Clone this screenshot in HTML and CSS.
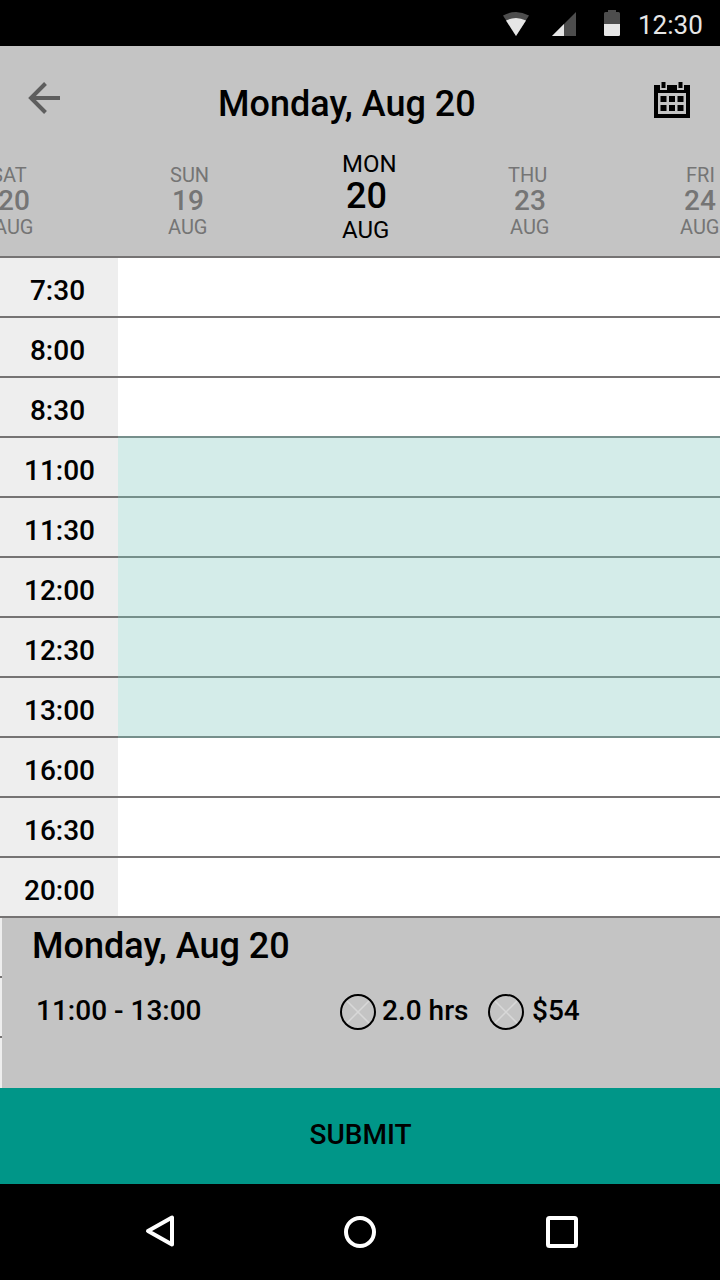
FILE: index.html
```html
<!DOCTYPE html>
<html lang="en">
<head>
<meta charset="utf-8">
<title>Monday, Aug 20</title>
<link rel="stylesheet" href="styles.css">
</head>
<body>
<div class="screen">
  <div class="status">
    <svg class="status-icons" width="130" height="46" viewBox="0 0 130 46">
      <path fill="#4d4d4d" d="M3 15.5Q16 8.500 29 15.500L16 36Z"/>
      <path fill="#e6e6e6" d="M6 20.500Q16 15.500 26 20.500L16 36Z"/>
      <path fill="#4d4d4d" d="M76 12V36H52Z"/>
      <path fill="#e6e6e6" d="M64 24V36H52Z"/>
      <path fill="#4d4d4d" d="M108 10h8v2h2.500a1.500 1.500 0 0 1 1.500 1.500V24h-16V13.500a1.500 1.500 0 0 1 1.500-1.500h2.500Z"/>
      <path fill="#e6e6e6" d="M104 24h16v10.500a1.500 1.500 0 0 1-1.500 1.500h-13a1.500 1.500 0 0 1-1.500-1.500Z"/>
    </svg>
    <span class="clock">12:30</span>
  </div>
  <header class="header">
    <div class="toolbar">
      <svg class="back" width="34" height="34" viewBox="0 0 34 34" fill="none" stroke="#5e5e5e" stroke-width="4"><path d="M18.500 2.500L4 17L18.500 31.500M3.500 17H33"/></svg>
      <h1 class="title">Monday, Aug 20</h1>
      <svg class="calendar" width="36" height="36" viewBox="0 0 36 36">
        <path d="M0 3h36v33H0Z"/>
        <path fill="#c4c4c4" d="M4 11h28v21H4ZM6 2h7v6H6ZM23 2h7v6h-7Z"/>
        <path d="M7.500 0h4v6h-4ZM24.500 0h4v6h-4ZM6.500 14h6v6h-6ZM15 14h6v6h-6ZM23.500 14h6v6h-6ZM6.500 23h6v6h-6ZM15 23h6v6h-6ZM23.500 23h6v6h-6Z"/>
      </svg>
    </div>
    <div class="days">
      <div class="day sat"><span class="name">SAT</span><span class="num">20</span><span class="month">AUG</span></div>
      <div class="day sun"><span class="name">SUN</span><span class="num">19</span><span class="month">AUG</span></div>
      <div class="day mon active"><span class="name">MON</span><span class="num">20</span><span class="month">AUG</span></div>
      <div class="day thu"><span class="name">THU</span><span class="num">23</span><span class="month">AUG</span></div>
      <div class="day fri"><span class="name">FRI</span><span class="num">24</span><span class="month">AUG</span></div>
    </div>
  </header>
  <main class="slots">
    <div class="slot"><span class="time short">7:30</span><span class="space"></span></div>
    <div class="slot"><span class="time short">8:00</span><span class="space"></span></div>
    <div class="slot"><span class="time short">8:30</span><span class="space"></span></div>
    <div class="slot"><span class="time">11:00</span><span class="space picked"></span></div>
    <div class="slot"><span class="time">11:30</span><span class="space picked"></span></div>
    <div class="slot"><span class="time">12:00</span><span class="space picked"></span></div>
    <div class="slot"><span class="time">12:30</span><span class="space picked"></span></div>
    <div class="slot"><span class="time">13:00</span><span class="space picked"></span></div>
    <div class="slot"><span class="time">16:00</span><span class="space picked-end"></span></div>
    <div class="slot"><span class="time">16:30</span><span class="space"></span></div>
    <div class="slot"><span class="time">20:00</span><span class="space"></span></div>
  </main>
  <div class="bottom">
    <div class="edge"><i></i><i></i><i></i></div>
    <section class="summary">
      <h2 class="summary-title">Monday, Aug 20</h2>
      <div class="details">
        <span class="range">11:00 - 13:00</span>
        <svg class="mark" width="36" height="36" viewBox="0 0 36 36" fill="none"><path stroke="#d8d8d8" stroke-width="1.500" d="M7 7L29 29M29 7L7 29"/><circle cx="18" cy="18" r="17" stroke="#000" stroke-width="2"/></svg>
        <span class="hours">2.0 hrs</span>
        <svg class="mark" width="36" height="36" viewBox="0 0 36 36" fill="none"><path stroke="#d8d8d8" stroke-width="1.500" d="M7 7L29 29M29 7L7 29"/><circle cx="18" cy="18" r="17" stroke="#000" stroke-width="2"/></svg>
        <span class="price">$54</span>
      </div>
    </section>
  </div>
  <button class="submit">SUBMIT</button>
  <nav class="nav">
    <svg width="36" height="36" viewBox="0 0 36 36" fill="none" stroke="#fff" stroke-width="4" stroke-linejoin="round"><path d="M30 3.500V30.500L6 17Z"/></svg>
    <svg width="36" height="36" viewBox="0 0 36 36" fill="none" stroke="#fff" stroke-width="4"><circle cx="18" cy="18" r="14"/></svg>
    <svg class="recent" width="36" height="36" viewBox="0 0 36 36" fill="none" stroke="#fff" stroke-width="4"><rect x="4" y="4" width="28" height="28" rx="1.500"/></svg>
  </nav>
</div>
</body>
</html>
```
FILE: styles.css
```css
* { box-sizing: border-box; }
body { margin: 0; font-family: Roboto, "Liberation Sans", sans-serif; color: #000; }
svg { display: block; flex: none; }
.screen { width: 720px; height: 1280px; display: flex; flex-direction: column; overflow: hidden; background: #fff; white-space: nowrap; }

.status { height: 46px; background: #000; display: flex; padding-left: 500px; }
.clock { margin-left: 8px; padding-top: 1px; line-height: 48px; font-size: 26px; color: #e6e6e6; }

.header { height: 210px; background: #c4c4c4; }
.toolbar { height: 104px; display: flex; }
.back { margin: 35px 0 0 27px; }
.title { width: 260px; margin: 38px 0 0 157px; font-size: 36px; line-height: 40px; font-weight: 500; }
.calendar { margin: 36px 0 0 176px; }

.days { display: grid; grid-template-columns: 167px 174px 167px 171px 41px; height: 106px; overflow: hidden; }
.day { display: flex; flex-direction: column; padding-top: 13px; color: #757575; font-size: 20px; }
.name { line-height: 24px; }
.num { font-size: 28px; font-weight: 500; line-height: 28px; }
.month { line-height: 24px; }
.active { padding-top: 0; color: #000; font-size: 24px; }
.active .name { line-height: 28px; }
.active .num { font-size: 36px; line-height: 36px; }
.active .month { line-height: 32px; }
.sat .name { margin-left: -9px; }
.sat .num { margin-left: -2px; }
.sat .month { margin-left: -6px; }
.sun .name { margin-left: 3px; }
.sun .num { margin-left: 5px; }
.sun .month { margin-left: 1px; }
.mon .name { margin-left: 1px; }
.mon .num { margin-left: 5px; }
.mon .month { margin-left: 1px; }
.thu .num { margin-left: 6px; }
.thu .month { margin-left: 2px; }
.fri .name { margin-left: 7px; }
.fri .num { margin-left: 5px; }
.fri .month { margin-left: 1px; }

.slot { height: 60px; display: flex; }
.time { width: 118px; border-top: 2px solid #757373; background: #eee; padding-left: 1px; text-align: center; font-size: 28px; font-weight: 500; line-height: 66px; height: 60px; overflow: hidden; }
.short { padding: 0 3px 0 0; }
.space { flex: 1; border-top: 2px solid #757373; }
.picked { background: #d4ece9; border-color: #768f8b; }
.picked-end { border-color: #768f8b; }

.bottom { height: 172px; border-top: 2px solid #757373; display: flex; }
.edge { width: 2px; background: #eee; }
.edge i { display: block; height: 60px; border-bottom: 2px solid #757373; }
.edge i:last-child { height: 50px; border: 0; }
.summary { flex: 1; background: #c4c4c4; }
.summary-title { margin: 8px 0 0 30px; font-size: 36px; line-height: 40px; font-weight: 500; }
.details { display: flex; padding: 28px 0 0 34px; font-size: 28px; line-height: 34px; font-weight: 500; }
.range { width: 304px; }
.hours { width: 106px; padding-left: 6px; margin-right: 6px; }
.price { padding-left: 8px; }

.submit { height: 96px; border: 0; padding: 0 0 4px 1px; background: #009688; color: #000; font: 500 28px Roboto, sans-serif; }
.nav { height: 96px; background: #000; display: flex; gap: 164px; padding: 30px 0 0 142px; }
.recent { margin-left: 2px; }
```
